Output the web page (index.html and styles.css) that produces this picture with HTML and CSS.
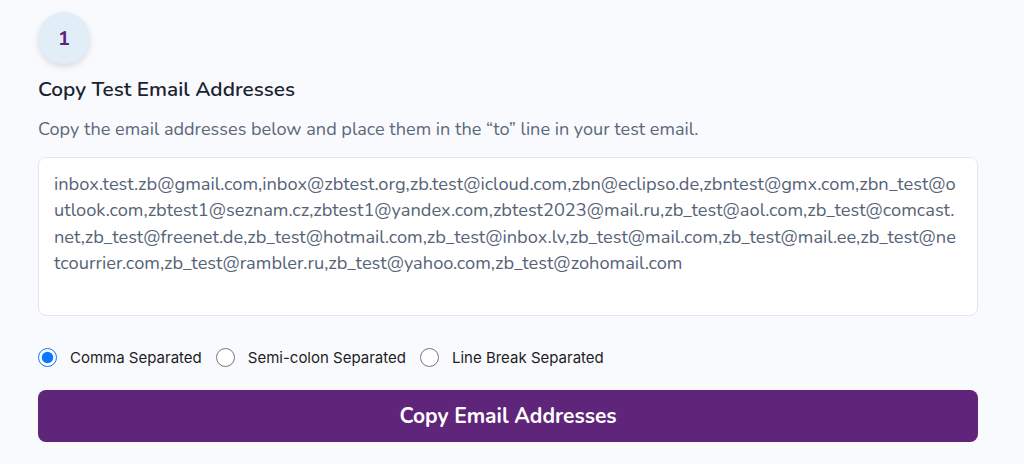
FILE: index.html
```html
<!DOCTYPE html>
<html lang="en">
<head>
    <meta charset="UTF-8">
    <title>Copy Test Email Addresses</title>
    <link rel="stylesheet" href="styles.css">
</head>
<body>
    <div class="step">
        <div class="step-num">1</div>
        <h2>Copy Test Email Addresses</h2>
        <p class="desc">Copy the email addresses below and place them in the “to” line in your test email.</p>

        <textarea class="emails" id="emails" readonly>inbox.test.zb@gmail.com,inbox@zbtest.org,zb.test@icloud.com,zbn@eclipso.de,zbntest@gmx.com,zbn_test@outlook.com,zbtest1@seznam.cz,zbtest1@yandex.com,zbtest2023@mail.ru,zb_test@aol.com,zb_test@comcast.net,zb_test@freenet.de,zb_test@hotmail.com,zb_test@inbox.lv,zb_test@mail.com,zb_test@mail.ee,zb_test@netcourrier.com,zb_test@rambler.ru,zb_test@yahoo.com,zb_test@zohomail.com</textarea>

        <div class="options">
            <label><input type="radio" name="sep" checked> Comma Separated</label>
            <label><input type="radio" name="sep"> Semi-colon Separated</label>
            <label><input type="radio" name="sep"> Line Break Separated</label>
        </div>

        <button class="copy-btn">Copy Email Addresses</button>
    </div>
</body>
</html>
```

FILE: styles.css
```css
body {
    font-family: 'Nunito', 'Lato', sans-serif;
    background: #f9fafd;
    margin: 0;
    padding: 12px 46px 0 38px;
}

.step-num {
    width: 52px;
    height: 52px;
    border-radius: 50%;
    background: #e1eef8;
    box-shadow: 0 3px 6px rgba(0,0,0,0.12);
    display: flex;
    align-items: center;
    justify-content: center;
    color: #5e2279;
    font-size: 20px;
    font-weight: 700;
}

h2 {
    margin: 12px 0 0;
    font-size: 20.8px;
    font-weight: 600;
    line-height: 26px;
    color: #1b2330;
}

.desc {
    margin: 15px 0 0;
    font-size: 18.1px;
    line-height: 24px;
    color: #5b687a;
}

.emails {
    display: block;
    box-sizing: border-box;
    width: 100%;
    height: 159px;
    margin-top: 16px;
    padding: 13px 15px;
    border: 1px solid #e3e7ee;
    border-radius: 8px;
    background: white;
    font-family: inherit;
    font-size: 18.25px;
    line-height: 26.3px;
    color: #566376;
    resize: none;
    word-break: break-all;
    outline: none;
}

.options {
    display: flex;
    align-items: center;
    gap: 14px;
    margin-top: 32px;
    font-family: 'Inter', 'Liberation Sans', sans-serif;
    font-size: 15px;
    color: #1d1d1f;
}

.options label {
    display: flex;
    align-items: center;
    gap: 13px;
}

.options input {
    width: 19px;
    height: 19px;
    margin: 0;
    accent-color: #0b76ff;
}

.copy-btn {
    display: block;
    width: 100%;
    height: 52px;
    margin-top: 23px;
    border: none;
    border-radius: 8px;
    background: #5f257b;
    color: white;
    font-family: inherit;
    font-size: 21px;
    font-weight: 700;
    cursor: pointer;
}
```
